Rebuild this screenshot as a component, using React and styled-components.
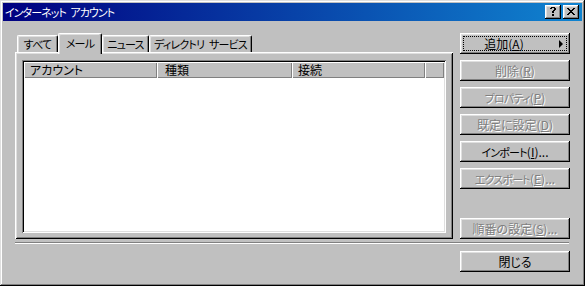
import React from "react";
import styled, { createGlobalStyle } from "styled-components";

const GlobalStyle = createGlobalStyle`
  html, body { margin: 0; padding: 0; background: #c0c0c0; }
  * { box-sizing: border-box; }
`;

const FONT = `"Noto Sans CJK JP", "Noto Sans", sans-serif`;

const Window = styled.div`
  width: 585px;
  height: 286px;
  padding: 3px;
  background: #c0c0c0;
  box-shadow: inset -1px -1px #000, inset 1px 1px #dfdfdf,
    inset -2px -2px #808080, inset 2px 2px #fff;
  display: flex;
  flex-direction: column;
  font-family: ${FONT};
  font-size: 12px;
  font-feature-settings: "palt" 1;
  color: #000;
`;

/* narrow proportional kana run, like the bitmap UI font */
const Kana = styled.span`
  font-size: 11px;
  letter-spacing: ${(p) => (p.$tight ? -0.95 : -0.8)}px;
  word-spacing: 3px;
`;

const TitleBar = styled.div`
  height: 18px;
  flex: none;
  display: flex;
  align-items: center;
  padding: 0 3px 0 2px;
  background: linear-gradient(to right, #000080, #1084d0);
  color: #fff;
`;

const TitleText = styled.div`
  flex: 1;
  line-height: 18px;
  white-space: nowrap;
`;

const TitleButtons = styled.div`
  display: flex;
  gap: 2px;
`;

const TitleButton = styled.div`
  width: 16px;
  height: 14px;
  background: #c0c0c0;
  box-shadow: inset -1px -1px #000, inset 1px 1px #fff,
    inset -2px -2px #808080, inset 2px 2px #dfdfdf;
  display: flex;
  align-items: center;
  justify-content: center;
  padding-bottom: 1px;
`;

const Body = styled.div`
  flex: 1;
  display: flex;
  flex-direction: column;
  padding: 12px 12px 11px 12px;
`;

const MainRow = styled.div`
  height: 206px;
  display: flex;
  gap: 7px;
`;

const TabControl = styled.div`
  width: 438px;
  display: flex;
  flex-direction: column;
`;

const TabStrip = styled.div`
  height: 19px;
  flex: none;
  display: flex;
  align-items: flex-end;
  padding-left: 2px;
`;

const Tab = styled.div`
  position: relative;
  z-index: ${(p) => (p.$active ? 2 : 1)};
  width: ${(p) => p.$w}px;
  height: ${(p) => (p.$active ? 21 : 17)}px;
  margin-bottom: ${(p) => (p.$active ? -2 : 0)}px;
  padding-bottom: ${(p) => (p.$active ? 3 : 0)}px;
  background: #c0c0c0;
  border-top: 1px solid #fff;
  border-left: 1px solid #fff;
  border-right: 1px solid #000;
  border-radius: 2px 2px 0 0;
  box-shadow: inset -1px 0 #808080, inset 1px 1px #dfdfdf;
  display: flex;
  align-items: center;
  justify-content: center;
  white-space: nowrap;
`;

const Panel = styled.div`
  flex: 1;
  display: flex;
  padding: 8px 7px 6px 7px;
  background: #c0c0c0;
  box-shadow: inset 1px 1px #fff, inset -1px -1px #000,
    inset 2px 2px #dfdfdf, inset -2px -2px #808080;
`;

const ListBox = styled.div`
  flex: 1;
  padding: 2px;
  background: #fff;
  box-shadow: inset 1px 1px #808080, inset -1px -1px #fff,
    inset 2px 2px #000, inset -2px -2px #dfdfdf;
  display: flex;
  flex-direction: column;
`;

const HeaderRow = styled.div`
  height: 16px;
  display: flex;
`;

const HeaderCell = styled.div`
  flex: ${(p) => (p.$w ? "none" : "1")};
  width: ${(p) => (p.$w ? `${p.$w}px` : "auto")};
  background: #c0c0c0;
  box-shadow: inset 1px 1px #fff, inset -1px -1px #808080;
  padding-left: ${(p) => p.$pad || 6}px;
  line-height: 16px;
  white-space: nowrap;
  overflow: hidden;
`;

const ButtonColumn = styled.div`
  width: 110px;
  display: flex;
  flex-direction: column;
  gap: 6px;
`;

const Btn = styled.div`
  position: relative;
  flex: none;
  width: 110px;
  height: 21px;
  margin-top: ${(p) => (p.$pushDown ? "auto" : "0")};
  padding-right: ${(p) => (p.$arrow ? 22 : 0)}px;
  background: #c0c0c0;
  box-shadow: inset -1px -1px #000, inset 1px 1px #fff,
    inset -2px -2px #808080, inset 2px 2px #dfdfdf;
  display: flex;
  align-items: center;
  justify-content: center;
  white-space: nowrap;
  color: ${(p) => (p.$disabled ? "#808080" : "#000")};
  text-shadow: ${(p) => (p.$disabled ? "1px 1px 0 #fff" : "none")};
`;

const FocusRing = styled.span`
  position: absolute;
  left: 3px;
  top: 3px;
  right: 3px;
  bottom: 3px;
  border: 1px dotted #000;
  pointer-events: none;
`;

const Arrow = styled.span`
  position: absolute;
  right: 7px;
  top: 7px;
  width: 0;
  height: 0;
  border-top: 4px solid transparent;
  border-bottom: 4px solid transparent;
  border-left: 4px solid #000;
`;

const Separator = styled.div`
  margin-top: 3px;
  width: 554px;
  height: 2px;
  border-top: 1px solid #808080;
  border-bottom: 1px solid #fff;
`;

const CloseRow = styled.div`
  margin-top: 7px;
  display: flex;
  justify-content: flex-end;
`;

const Pixels = ({ w, h, rows }) => (
  <svg width={w} height={h} viewBox={`0 0 ${w} ${h}`} shapeRendering="crispEdges">
    {rows.map((r, y) =>
      r.split("").map((c, x) =>
        c === "X" ? <rect key={`${x}-${y}`} x={x} y={y} width="1" height="1" fill="#000" /> : null
      )
    )}
  </svg>
);

const HELP = [
  ".XXXX.",
  "XX..XX",
  "....XX",
  "...XX.",
  "..XX..",
  "..XX..",
  "......",
  "..XX..",
  "..XX..",
];

const CLOSE = [
  "XX....XX",
  ".XX..XX.",
  "..XXXX..",
  "...XX...",
  "..XXXX..",
  ".XX..XX.",
  "XX....XX",
];

const buttons = [
  { label: "追加", key: "A", focus: true, arrow: true },
  { label: "削除", key: "R", disabled: true },
  { label: <Kana>プロパティ</Kana>, key: "P", disabled: true },
  { label: "既定に設定", key: "D", disabled: true },
  { label: <Kana>インポート</Kana>, key: "I", suffix: "..." },
  { label: <Kana>エクスポート</Kana>, key: "E", suffix: "...", disabled: true },
];

const Label = ({ label, k, suffix = "" }) => (
  <span>
    {label}(<u>{k}</u>){suffix}
  </span>
);

export default function App() {
  return (
    <>
      <GlobalStyle />
      <Window>
        <TitleBar>
          <TitleText>
            <Kana $tight>インターネット アカウント</Kana>
          </TitleText>
          <TitleButtons>
            <TitleButton>
              <Pixels w={6} h={9} rows={HELP} />
            </TitleButton>
            <TitleButton>
              <Pixels w={8} h={7} rows={CLOSE} />
            </TitleButton>
          </TitleButtons>
        </TitleBar>
        <Body>
          <MainRow>
            <TabControl>
              <TabStrip>
                <Tab $w={41}>
                  <Kana>すべて</Kana>
                </Tab>
                <Tab $w={44} $active>
                  <Kana>メール</Kana>
                </Tab>
                <Tab $w={47}>
                  <Kana>ニュース</Kana>
                </Tab>
                <Tab $w={103}>
                  <Kana>ディレクトリ サービス</Kana>
                </Tab>
              </TabStrip>
              <Panel>
                <ListBox>
                  <HeaderRow>
                    <HeaderCell $w={133}>アカウント</HeaderCell>
                    <HeaderCell $w={135} $pad={8}>
                      種類
                    </HeaderCell>
                    <HeaderCell $w={133}>接続</HeaderCell>
                    <HeaderCell />
                  </HeaderRow>
                </ListBox>
              </Panel>
            </TabControl>
            <ButtonColumn>
              {buttons.map((b) => (
                <Btn key={b.key} $disabled={b.disabled} $arrow={b.arrow}>
                  <Label label={b.label} k={b.key} suffix={b.suffix} />
                  {b.focus && <FocusRing />}
                  {b.arrow && <Arrow />}
                </Btn>
              ))}
              <Btn $disabled $pushDown>
                <Label label="順番の設定" k="S" suffix="..." />
              </Btn>
            </ButtonColumn>
          </MainRow>
          <Separator />
          <CloseRow>
            <Btn>閉じる</Btn>
          </CloseRow>
        </Body>
      </Window>
    </>
  );
}
